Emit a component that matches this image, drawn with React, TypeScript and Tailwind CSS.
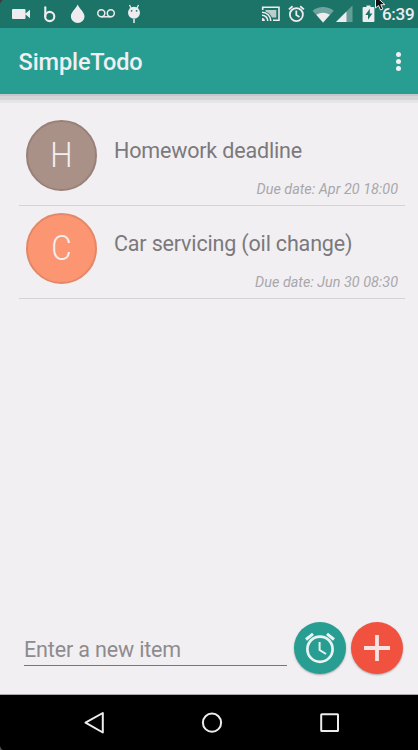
import type { ReactNode } from 'react';

function StatusBar() {
  return (
    <div className="relative h-7 shrink-0 bg-[#1c7469]">
      <svg className="block" width="418" height="28" viewBox="0 0 418 28" fill="#eeecef">
        <path d="M0 0h3Q1 1 0 4z" fill="#3b3f3f" />
        <path d="M13 9h11.500q1 0 1 1v8q0 1-1 1H13q-1 0-1-1v-8q0-1 1-1zM25 14l5-4.300v8.600z" />
        <g fill="none" stroke="#eeecef" strokeWidth="2.100" strokeLinecap="round">
          <path d="M45.300 7.300v9.200" />
          <circle cx="49.700" cy="16.500" r="4.600" />
        </g>
        <path d="M77.700 4.500C75.500 9 70.900 12.200 70.900 16.400a6.800 6.600 0 0 0 13.600 0C84.500 12.200 79.700 9 77.700 4.500z" />
        <g fill="none" stroke="#eeecef" strokeWidth="1.500">
          <circle cx="101.300" cy="13.300" r="3.500" />
          <circle cx="110.800" cy="13.300" r="3.500" />
          <path d="M101.300 16.800h9.500" />
        </g>
        <circle cx="134" cy="12.700" r="6" />
        <path d="M129.500 5l2 4M138.500 5l-2 4" stroke="#eeecef" strokeWidth="1.300" />
        <path d="M134 19v4" stroke="#eeecef" strokeWidth="1.500" />
        <circle cx="131.600" cy="10.800" r=".9" fill="#1c7469" />
        <circle cx="136.600" cy="10.800" r=".9" fill="#1c7469" />
        <g fill="none" stroke="#eeecef" strokeWidth="1.600">
          <path d="M262.700 10V7.300h16.300v13h-6" />
          <path d="M262 12.200a8.800 8.800 0 0 1 8.800 8.800M262 15.200a5.800 5.800 0 0 1 5.800 5.800" />
        </g>
        <path d="M262 18.100a2.900 2.900 0 0 1 2.900 2.900H262z" />
        <path d="M265.500 10h10.800v7.600h-4.300a11 11 0 0 0-6.500-6z" opacity=".75" />
        <g fill="none" stroke="#eeecef" strokeWidth="1.800">
          <circle cx="296.400" cy="14.600" r="6.500" />
          <path d="M296.300 10.500v4.400l3.200 2M288.900 9.400l3.700-3.100M303.900 9.400l-3.700-3.100" />
        </g>
        <path d="M312.500 10.700a17 17 0 0 1 21.200 0L323.100 22.500z" opacity=".4" />
        <path d="M316.300 14.800q6.800-4 13.600 0L323.100 22.500z" />
        <path d="M352.500 5.600V22H336z" opacity=".35" />
        <path d="M346.500 11.500V22H336z" />
        <path d="M366.500 5.500h4V7h3q.9 0 .9.900v13.200q0 .9-.9.900h-10q-.9 0-.9-.9V7.900q0-.9.900-.9h3z" />
        <path d="M369.800 8.800l-4.500 6.300h2.700v4.700l4.400-6.400h-2.600z" fill="#1c7469" />
        <path d="M375.500-4V8l3-2.500 2 4.500 2.300-1-2-4.300h4.200z" fill="#111" stroke="#eee" strokeWidth="1" />
      </svg>
      <span className="absolute top-1 left-[382px] text-[17px] leading-5 font-medium tracking-[-0.300px] text-[#eeecef]">6:39</span>
    </div>
  );
}

function AppBar() {
  return (
    <header className="flex h-[66px] shrink-0 items-center justify-between bg-[#289e92] pr-[17.500px] pl-[18.500px]">
      <h1 className="mt-[2px] text-[23.500px] leading-7 font-medium tracking-[-0.100px] text-[#f1eff2]">SimpleTodo</h1>
      <div className="flex flex-col gap-[2px]">
        <i className="size-[5px] rounded-full bg-[#f1eff2]" />
        <i className="size-[5px] rounded-full bg-[#f1eff2]" />
        <i className="size-[5px] rounded-full bg-[#f1eff2]" />
      </div>
    </header>
  );
}

interface TodoProps {
  letter: string;
  title: string;
  due: string;
  color: string;
}

function TodoRow({ letter, title, due, color }: TodoProps) {
  return (
    <li className="flex h-[93px] border-b border-[#d5d3d7] pt-[6.500px] pl-[6.500px]">
      <div className={`flex size-[71px] shrink-0 items-center justify-center rounded-full border-2 text-[35px] leading-none font-light text-[#f1eff2] ${color}`}>
        <span className="scale-x-90">{letter}</span>
      </div>
      <div className="flex flex-1 flex-col pr-[7px] pl-[17.500px]">
        <span className="mt-[17.500px] text-[21.500px] leading-7 tracking-[-0.170px] whitespace-nowrap text-[#7b797c]">{title}</span>
        <span className="mt-[17px] self-end text-[14.400px] leading-4 whitespace-nowrap text-[#a9a7aa] italic">{due}</span>
      </div>
    </li>
  );
}

function RoundButton({ label, color, children }: { label: string; color: string; children: ReactNode }) {
  return (
    <button aria-label={label} className={`size-[52px] shrink-0 rounded-full shadow-[0_1px_2px_rgba(0,0,0,0.3)] ${color}`}>
      <svg width="52" height="52" viewBox="0 0 52 52" fill="none" stroke="#e9f3f3">
        {children}
      </svg>
    </button>
  );
}

function NavBar() {
  return (
    <nav className="h-[56px] shrink-0 border-t border-[#aaa8ab] bg-black">
      <svg className="block" width="418" height="55" viewBox="0 695 418 55" fill="none" stroke="#eeecef" strokeWidth="2">
        <path d="M85.500 722.700L102.800 713v19.500z" strokeLinejoin="round" />
        <circle cx="212" cy="722.700" r="9.100" />
        <rect x="321.200" y="714.200" width="16.800" height="16.800" rx=".5" />
        <path d="M0 746q.5 3 3 4H0z" fill="#555" stroke="none" />
      </svg>
    </nav>
  );
}

export default function App() {
  return (
    <div className="flex h-[750px] w-[418px] flex-col overflow-hidden bg-[#f1eff2] font-['Roboto',sans-serif]">
      <StatusBar />
      <AppBar />
      <div className="h-[2px] shrink-0 bg-[#c6c7ca]" />
      <div className="h-1 shrink-0 bg-[#d5d4d7]" />
      <div className="h-[3px] shrink-0 bg-[#e6e4e8]" />
      <ul className="mt-[10px] mr-[13px] ml-[19px] flex-1">
        <TodoRow letter="H" title="Homework deadline" due="Due date: Apr 20 18:00" color="bg-[#aa9188] border-[#998078]" />
        <TodoRow letter="C" title="Car servicing (oil change)" due="Due date: Jun 30 08:30" color="bg-[#fb9572] border-[#e48768]" />
      </ul>
      <div className="mb-5 flex h-[52px] shrink-0 items-start pr-[15px] pl-6">
        <div className="mr-[7px] h-[44px] flex-1 border-b border-[#777579] pt-[14px] text-[21.500px] leading-7 tracking-[-0.150px] text-[#8d8b8e]">Enter a new item</div>
        <div className="flex gap-[5px]">
          <RoundButton label="Set reminder" color="bg-[#289e92]">
            <circle cx="26" cy="27.200" r="12.600" strokeWidth="2.700" />
            <path d="M25.600 20v8l6.400 4" strokeWidth="2" />
            <path d="M12 17.500l7-5.600M40 17.500l-7-5.600" strokeWidth="3" />
          </RoundButton>
          <RoundButton label="Add item" color="bg-[#f0523f]">
            <path d="M13 26h26M26 13v26" strokeWidth="3.800" stroke="#f6e3e3" />
          </RoundButton>
        </div>
      </div>
      <NavBar />
    </div>
  );
}
